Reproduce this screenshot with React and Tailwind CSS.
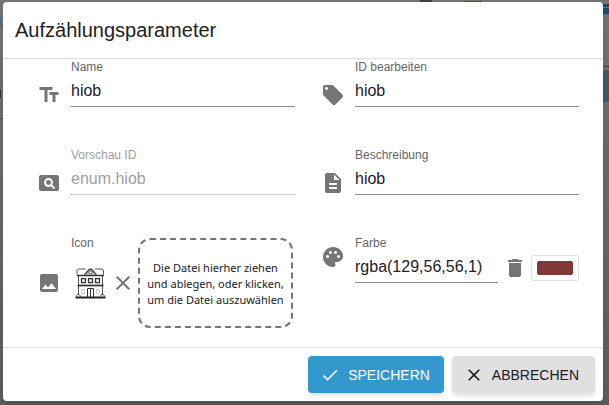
import { useState } from "react";
import {
  MdCheck,
  MdClose,
  MdDelete,
  MdDescription,
  MdImage,
  MdLocalOffer,
  MdPageview,
  MdPalette,
  MdTextFields,
} from "react-icons/md";

const initial = {
  name: "hiob",
  id: "hiob",
  description: "hiob",
  color: "rgba(129,56,56,1)",
};

function Field({ id, label, icon: Icon, value, onChange, disabled }) {
  return (
    <div className="flex items-end gap-2.5">
      <Icon className="size-6 shrink-0 text-[#757575]" aria-hidden="true" />
      <div className="flex min-w-0 flex-1 flex-col">
        <label
          htmlFor={id}
          className={`text-xs leading-4 ${disabled ? "text-[#9e9e9e]" : "text-[#666666]"}`}
        >
          {label}
        </label>
        <input
          id={id}
          type="text"
          value={value}
          disabled={disabled}
          onChange={(e) => onChange?.(e.target.value)}
          className={`h-8 w-full border-b bg-transparent text-base outline-none ${
            disabled
              ? "border-dotted border-[#b0b0b0] text-[#9e9e9e]"
              : "border-[#8c8c8c] text-[#212121]"
          }`}
        />
      </div>
    </div>
  );
}

function House() {
  return (
    <svg viewBox="0 0 32 32" className="size-8" fill="none" stroke="#333" aria-hidden="true">
      <path d="M2 7.500V3.500L3.500 2h7M20 2h7l1.500 1.500v4" stroke="#555" />
      <path d="M9.500 7.500C12 6.500 13 2 15.500 2S19 6.500 21.500 7.500" fill="#bbb" stroke="#444" strokeWidth="1.500" />
      <circle cx="15.500" cy="5.500" r="1.500" fill="#fff" stroke="#666" />
      <path d="M2 8.500h27" strokeWidth="1.500" />
      <path d="M3.500 9v19M27.500 9v19" stroke="#555" />
      <path d="M6.500 11.500h4v4h-4zM13.500 11.500h4v4h-4zM20.500 11.500h4v4h-4z" fill="#f0f0f0" strokeWidth="1.250" />
      <path d="M2.500 18.500h26" strokeWidth="1.750" />
      <path d="M12.500 30v-8.500h6V30M15.500 22v8" />
      <path d="M6.500 22.500h3v4h-3zM21.500 22.500h3v4h-3z" stroke="#ccc" />
      <path d="M1.500 29.500C2 27 4 26 5.500 29.500M25.500 29.500c1-3.500 3.500-2.500 4 0" stroke="#444" />
      <path d="M.5 30.500h30" stroke="#222" strokeWidth="2" />
    </svg>
  );
}

/* The dimmed page that shows round the edges of the dialog. */
function Backdrop() {
  return (
    <div className="absolute inset-0 -z-10 overflow-hidden bg-linear-to-b from-[#747474] to-[#5c5c5c]" aria-hidden="true">
      <div className="absolute top-0 left-[420px] h-0.5 w-3 bg-[#404040]" />
      <div className="absolute top-px left-[464px] h-px w-[18px] bg-[#1f5c7a]" />
      <div className="absolute top-1 right-0 h-[3px] w-3 bg-[#174f6a]" />
      <div className="absolute top-2 right-0 h-1.5 w-2 bg-[#174f6a]" />
      <div className="absolute top-[66px] right-0 h-px w-2 bg-[#404040]" />
      <div className="absolute top-[70px] right-0 h-8 w-2 bg-[#405a66]" />
      <div className="absolute top-3 left-0 h-4 w-px -rotate-12 bg-[#3c6f8a]" />
      <div className="absolute top-[90px] left-0 h-2 w-px bg-[#333333]" />
      <div className="absolute top-[118px] left-0 h-px w-1 bg-[#4a4a4a]" />
    </div>
  );
}

export default function App() {
  const [form, setForm] = useState(initial);
  const set = (key) => (value) => setForm((f) => ({ ...f, [key]: value }));

  return (
    <div className="relative isolate min-h-screen pt-0.5 pr-1.5 pb-1 pl-[3px] font-['Liberation_Sans',Arial,sans-serif]">
      <Backdrop />
      <div
        role="dialog"
        aria-labelledby="dialog-title"
        className="rounded bg-white shadow-lg"
      >
        <header className="flex h-[57px] items-center border-b border-[#e0e0e0] px-3">
          <h2 id="dialog-title" className="text-xl text-[#212121]">
            Aufzählungsparameter
          </h2>
        </header>

        <div className="grid grid-cols-2 gap-x-[26px] gap-y-10 pr-6 pb-4 pl-[34px]">
          <Field id="name" label="Name" icon={MdTextFields} value={form.name} onChange={set("name")} />
          <Field id="edit-id" label="ID bearbeiten" icon={MdLocalOffer} value={form.id} onChange={set("id")} />
          <Field id="preview-id" label="Vorschau ID" icon={MdPageview} value={`enum.${form.id}`} disabled />
          <Field
            id="description"
            label="Beschreibung"
            icon={MdDescription}
            value={form.description}
            onChange={set("description")}
          />

          <div className="flex h-24 items-center">
            <MdImage className="size-6 shrink-0 text-[#757575]" aria-hidden="true" />
            <div className="ml-2.5 flex h-full w-10 flex-col justify-between pb-8">
              <span className="text-xs leading-4 text-[#666666]">Icon</span>
              <div className="flex justify-center">
                <House />
              </div>
            </div>
            <button type="button" aria-label="Icon entfernen" className="text-[#757575]">
              <MdClose className="size-6" />
            </button>
            <button
              type="button"
              className="mr-0.5 ml-[3px] h-[90px] flex-1 rounded-xl border-2 border-dashed border-[#757575] pt-0.5 font-['Noto_Sans',sans-serif] text-[11px] leading-4 whitespace-nowrap text-[#212121]"
            >
              Die Datei hierher ziehen
              <br />
              und ablegen, oder klicken,
              <br />
              um die Datei auszuwählen
            </button>
          </div>

          <div className="flex h-12 items-end">
            <MdPalette className="mt-2.5 mr-2.5 size-6 shrink-0 self-start text-[#757575]" aria-hidden="true" />
            <div className="flex min-w-0 flex-1 flex-col">
              <label htmlFor="color" className="text-xs leading-4 text-[#666666]">
                Farbe
              </label>
              <input
                id="color"
                type="text"
                value={form.color}
                onChange={(e) => set("color")(e.target.value)}
                className="h-8 w-full border-b border-[#8c8c8c] bg-transparent text-base text-[#212121] outline-none"
              />
            </div>
            <button type="button" aria-label="Farbe löschen" className="mb-[3px] ml-[5px] text-[#757575]">
              <MdDelete className="size-6" />
            </button>
            <button
              type="button"
              aria-label="Farbe wählen"
              className="mb-0.5 ml-1 h-[26px] w-12 rounded-xs border border-[#e0e0e0] p-[5px]"
            >
              <span className="block h-full rounded-xs" style={{ backgroundColor: form.color }} />
            </button>
          </div>
        </div>

        <footer className="flex justify-end gap-2 border-t border-[#e0e0e0] p-2">
          <button
            type="button"
            className="flex h-[37px] items-center gap-2 rounded bg-[#3399cc] pr-3.5 pl-3 text-sm text-white shadow-md"
          >
            <MdCheck className="size-5" />
            SPEICHERN
          </button>
          <button
            type="button"
            className="flex h-[37px] items-center gap-2 rounded bg-[#e0e0e0] pr-4 pl-3 text-sm text-[#212121] shadow-md"
          >
            <MdClose className="size-5" />
            ABBRECHEN
          </button>
        </footer>
      </div>
    </div>
  );
}
